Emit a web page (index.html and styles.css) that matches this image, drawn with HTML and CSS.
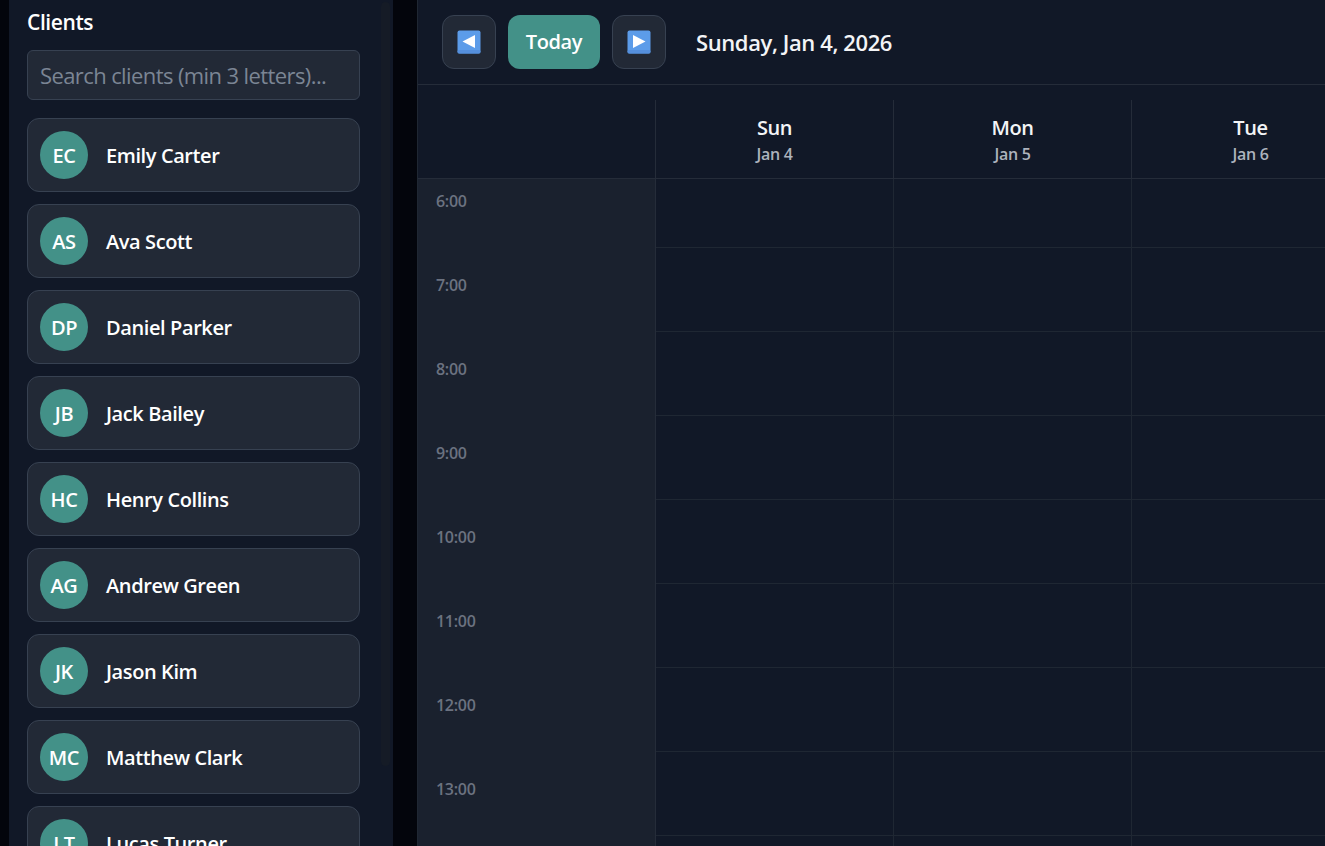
FILE: index.html
```html
<!DOCTYPE html>
<html lang="en">
<head>
<meta charset="utf-8">
<title>Calendar</title>
<link rel="stylesheet" href="styles.css">
</head>
<body>
<aside class="sidebar">
  <h2 class="sidebar-title">Clients</h2>
  <input class="search" type="text" placeholder="Search clients (min 3 letters)...">
  <div class="client-list">
    <div class="client"><span class="avatar">EC</span><span class="name">Emily Carter</span></div>
    <div class="client"><span class="avatar">AS</span><span class="name">Ava Scott</span></div>
    <div class="client"><span class="avatar">DP</span><span class="name">Daniel Parker</span></div>
    <div class="client"><span class="avatar">JB</span><span class="name">Jack Bailey</span></div>
    <div class="client"><span class="avatar">HC</span><span class="name">Henry Collins</span></div>
    <div class="client"><span class="avatar">AG</span><span class="name">Andrew Green</span></div>
    <div class="client"><span class="avatar">JK</span><span class="name">Jason Kim</span></div>
    <div class="client"><span class="avatar">MC</span><span class="name">Matthew Clark</span></div>
    <div class="client"><span class="avatar">LT</span><span class="name">Lucas Turner</span></div>
  </div>
  <div class="scroll-thumb"></div>
</aside>
<main class="main">
  <header class="toolbar">
    <button class="nav-btn" type="button" aria-label="Previous">
      <svg class="nav-icon" viewBox="0 0 24 24"><rect x="0.5" y="0.5" width="23" height="23" rx="2" fill="#5c9ce9"/><rect x="0.5" y="20" width="23" height="3.5" rx="1.5" fill="#558fdc"/><path d="M5.5 11.5 18 5v13z" fill="#fff"/></svg>
    </button>
    <button class="today-btn" type="button">Today</button>
    <button class="nav-btn" type="button" aria-label="Next">
      <svg class="nav-icon" viewBox="0 0 24 24"><rect x="0.5" y="0.5" width="23" height="23" rx="2" fill="#5c9ce9"/><rect x="0.5" y="20" width="23" height="3.5" rx="1.5" fill="#558fdc"/><path d="M18.5 11.5 6 5v13z" fill="#fff"/></svg>
    </button>
    <div class="current-date">Sunday, Jan 4, 2026</div>
  </header>
  <section class="calendar">
    <div class="cal-head">
      <div class="corner"></div>
      <div class="day-head"><div class="dow">Sun</div><div class="dom">Jan 4</div></div>
      <div class="day-head"><div class="dow">Mon</div><div class="dom">Jan 5</div></div>
      <div class="day-head"><div class="dow">Tue</div><div class="dom">Jan 6</div></div>
    </div>
    <div class="cal-scroll">
      <div class="cal-body">
        <div class="time">6:00</div><div class="cell"></div><div class="cell"></div><div class="cell"></div>
        <div class="time">7:00</div><div class="cell"></div><div class="cell"></div><div class="cell"></div>
        <div class="time">8:00</div><div class="cell"></div><div class="cell"></div><div class="cell"></div>
        <div class="time">9:00</div><div class="cell"></div><div class="cell"></div><div class="cell"></div>
        <div class="time">10:00</div><div class="cell"></div><div class="cell"></div><div class="cell"></div>
        <div class="time">11:00</div><div class="cell"></div><div class="cell"></div><div class="cell"></div>
        <div class="time">12:00</div><div class="cell"></div><div class="cell"></div><div class="cell"></div>
        <div class="time">13:00</div><div class="cell"></div><div class="cell"></div><div class="cell"></div>
        <div class="time">14:00</div><div class="cell"></div><div class="cell"></div><div class="cell"></div>
      </div>
    </div>
  </section>
</main>
</body>
</html>
```
FILE: styles.css
```css
* { box-sizing: border-box; }
html, body { height: 100%; }
body {
  margin: 0;
  height: 100vh;
  overflow: hidden;
  display: flex;
  background: #03050c;
  color: #f3f4f6;
  font-family: "Open Sans", "Noto Sans", sans-serif;
}
.sidebar {
  position: relative;
  flex: 0 0 384px;
  margin-left: 9px;
  height: 100%;
  overflow: hidden;
  background: #111827;
  padding: 0 33px 0 18px;
}
.sidebar-title {
  margin: 0;
  height: 50px;
  padding-top: 8px;
  font-size: 21px;
  line-height: 28px;
  font-weight: 600;
  color: #fff;
  letter-spacing: -0.4px;
}
.search {
  display: block;
  width: 100%;
  height: 50px;
  padding: 0 12px;
  background: #222936;
  border: 1px solid #374151;
  border-radius: 6px;
  color: #fff;
  font: 400 22px "Open Sans", sans-serif;
  letter-spacing: -0.6px;
  outline: none;
}
.search::placeholder { color: #7b8594; opacity: 1; }
.client-list {
  display: flex;
  flex-direction: column;
  gap: 12px;
  margin-top: 18px;
}
.client {
  display: flex;
  align-items: center;
  gap: 18px;
  height: 74px;
  flex: none;
  padding: 0 12px;
  background: #222936;
  border: 1px solid #374151;
  border-radius: 12px;
}
.avatar {
  flex: none;
  width: 48px;
  height: 48px;
  border-radius: 50%;
  background: #439188;
  color: #fff;
  display: flex;
  align-items: center;
  justify-content: center;
  font-size: 20px;
  font-weight: 600;
  letter-spacing: -0.4px;
}
.name {
  font-size: 20px;
  font-weight: 600;
  color: #fff;
  letter-spacing: -0.4px;
}
.scroll-thumb {
  position: absolute;
  top: 2px;
  left: 372px;
  width: 9px;
  height: 764px;
  border-radius: 5px;
  background: #151b26;
}
.main {
  flex: 1;
  min-width: 0;
  height: 100%;
  margin-left: 24px;
  background: #111827;
  border-left: 1px solid #1f2733;
  display: flex;
  flex-direction: column;
  overflow: hidden;
}
.toolbar {
  flex: none;
  height: 85px;
  display: flex;
  align-items: center;
  gap: 12px;
  padding: 0 24px 1px;
  border-bottom: 1px solid #252c39;
}
.nav-btn {
  width: 54px;
  height: 54px;
  padding: 0;
  display: flex;
  align-items: center;
  justify-content: center;
  background: #222936;
  border: 1px solid #374151;
  border-radius: 12px;
}
.nav-icon { width: 24px; height: 24px; display: block; }
.today-btn {
  width: 92px;
  height: 54px;
  padding: 0;
  border: 0;
  border-radius: 12px;
  background: #439188;
  color: #fff;
  font: 600 20px "Open Sans", sans-serif;
  letter-spacing: -0.4px;
}
.current-date {
  margin-left: 18px;
  font-size: 22px;
  font-weight: 600;
  letter-spacing: -0.4px;
}
.calendar {
  flex: 1;
  min-height: 0;
  display: flex;
  flex-direction: column;
  padding-top: 15px;
}
.cal-head, .cal-body {
  display: grid;
  grid-template-columns: repeat(4, 238px);
}
.cal-head { flex: none; height: 79px; border-bottom: 1px solid #252c39; }
.corner { border-right: 1px solid #252c39; }
.day-head {
  border-right: 1px solid #252c39;
  text-align: center;
  padding-top: 14px;
}
.dow { font-size: 20px; font-weight: 600; line-height: 28px; letter-spacing: -0.4px; }
.dom { font-size: 16px; font-weight: 600; line-height: 24px; color: #adb3bd; letter-spacing: -0.3px; }
.cal-scroll { flex: 1; min-height: 0; overflow: hidden; }
.cal-body { margin-top: -15px; grid-auto-rows: 84px; }
.time {
  background: #1a212e;
  border-right: 1px solid #252c39;
  padding: 24px 0 0 18px;
  font-size: 16px;
  line-height: 26px;
  font-weight: 600;
  color: #6b7280;
  letter-spacing: -0.3px;
}
.cell {
  border-right: 1px solid #1f2733;
  border-bottom: 1px solid #1f2733;
}
```
